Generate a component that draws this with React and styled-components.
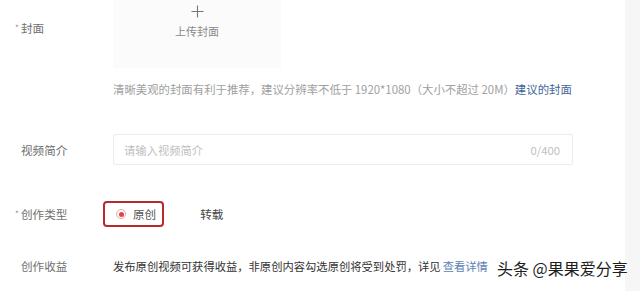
import React from "react";
import styled, { createGlobalStyle } from "styled-components";

const Global = createGlobalStyle`
  html, body { margin: 0; padding: 0; background: #fff; overflow: hidden; }
  body { font-family: "Noto Sans CJK SC", "Noto Sans", sans-serif; }
`;

const Page = styled.div`
  display: flex;
  width: 640px;
  height: 291px;
`;

const Main = styled.div`
  position: relative;
  width: 625px;
  display: flex;
  flex-direction: column;
`;

const Side = styled.div`
  flex: 1;
  background: #f6f6f7;
`;

const Row = styled.div`
  display: grid;
  grid-template-columns: 113px 1fr;
  align-items: ${(p) => (p.$top ? "start" : "center")};
  margin-top: ${(p) => p.$mt || 0}px;
`;

const Label = styled.div`
  padding-left: 21px;
  padding-top: ${(p) => p.$pt || 0}px;
  font-size: 11.6px;
  line-height: 14px;
  color: #707070;
  white-space: nowrap;
`;

const Star = styled.span`
  display: inline-block;
  width: 6px;
  margin-left: -6px;
  font-size: 8px;
  line-height: 8px;
  vertical-align: 2px;
  color: #888;
`;

const CoverBox = styled.div`
  width: 168px;
  height: 68px;
  background: #fbfbfb;
  display: flex;
  flex-direction: column;
  align-items: center;
  padding-top: 5px;
  box-sizing: border-box;
  gap: 6px;
  color: #8a8a8a;
  font-size: 11px;
  line-height: 14px;
`;

const Hint = styled.div`
  margin: 14px 0 0 113px;
  font-size: 11.4px;
  line-height: 14px;
  color: #a0a0a0;
  white-space: nowrap;
`;

const Link = styled.a`
  color: ${(p) => (p.$light ? "#5d82b4" : "#3f6699")};
  text-decoration: none;
  margin-left: ${(p) => p.$ml || 0}px;
`;

const InputBox = styled.div`
  width: 460px;
  height: 31px;
  box-sizing: border-box;
  border: 1px solid #ececec;
  border-radius: 2px;
  display: flex;
  align-items: center;
  justify-content: space-between;
  padding: 0 12px 0 10px;
  font-size: 11.3px;
  color: #c0c0c0;
`;

const Options = styled.div`
  display: flex;
  align-items: center;
  margin-left: -10px;
  gap: 36px;
`;

const RadioBox = styled.div`
  display: flex;
  align-items: center;
  gap: 7px;
  height: 26px;
  box-sizing: border-box;
  border: 2px solid #b52a30;
  border-radius: 4px;
  padding: 0 6px 0 11px;
  font-size: 11.6px;
  color: #555;
`;

const Circle = styled.span`
  width: 10px;
  height: 10px;
  box-sizing: border-box;
  border: 1px solid #e6a9a9;
  border-radius: 50%;
  display: flex;
  align-items: center;
  justify-content: center;
  &::after {
    content: "";
    width: 5px;
    height: 5px;
    border-radius: 50%;
    background: #e0444a;
  }
`;

const Plain = styled.span`
  font-size: 11.6px;
  color: #444;
`;

const Earn = styled.div`
  font-size: 11.3px;
  line-height: 14px;
  color: #333;
  white-space: nowrap;
`;

const Watermark = styled.div`
  position: absolute;
  left: 497px;
  top: 258px;
  font-size: 16px;
  line-height: 20px;
  color: #1e1e1e;
  white-space: nowrap;
  text-shadow: 1px 0 0 #fff, -1px 0 0 #fff, 0 1px 0 #fff, 0 -1px 0 #fff;
`;

export default function App() {
  return (
    <>
      <Global />
      <Page>
        <Main>
          <Row $top>
            <Label $pt={21}>
              <Star>*</Star>封面
            </Label>
            <CoverBox>
              <svg width="13" height="13" viewBox="0 0 13 13">
                <path d="M6.5 0.5v12M0.5 6.5h12" stroke="#777" strokeWidth="1.1" fill="none" />
              </svg>
              <span>上传封面</span>
            </CoverBox>
          </Row>
          <Hint>
            清晰美观的封面有利于推荐，建议分辨率不低于 1920*1080（大小不超过 20M）
            <Link>建议的封面</Link>
          </Hint>
          <Row $mt={38}>
            <Label>视频简介</Label>
            <InputBox>
              <span>请输入视频简介</span>
              <span>0/400</span>
            </InputBox>
          </Row>
          <Row $mt={36}>
            <Label>
              <Star>*</Star>创作类型
            </Label>
            <Options>
              <RadioBox>
                <Circle />
                原创
              </RadioBox>
              <Plain>转载</Plain>
            </Options>
          </Row>
          <Row $mt={32}>
            <Label>创作收益</Label>
            <Earn>
              发布原创视频可获得收益，非原创内容勾选原创将受到处罚，详见
              <Link $light $ml={2}>查看详情</Link>
            </Earn>
          </Row>
          <Watermark>头条 @果果爱分享</Watermark>
        </Main>
        <Side />
      </Page>
    </>
  );
}
